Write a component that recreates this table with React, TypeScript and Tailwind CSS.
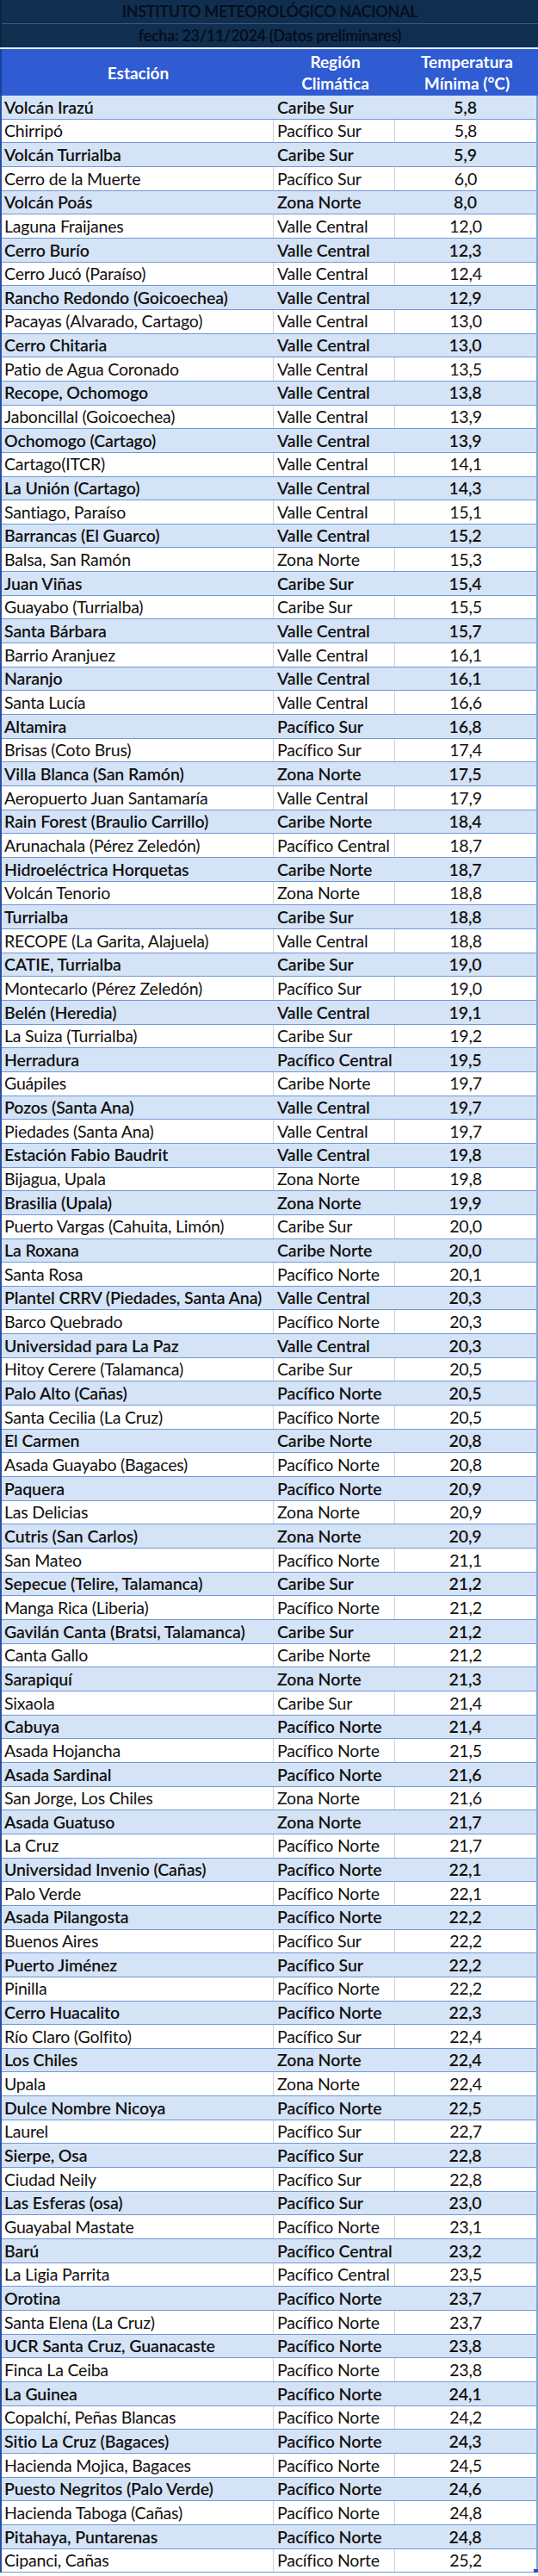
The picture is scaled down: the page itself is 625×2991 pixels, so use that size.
const rows: [string, string, string][] = [
  ["Volcán Irazú", "Caribe Sur", "5,8"],
  ["Chirripó", "Pacífico Sur", "5,8"],
  ["Volcán Turrialba", "Caribe Sur", "5,9"],
  ["Cerro de la Muerte", "Pacífico Sur", "6,0"],
  ["Volcán Poás", "Zona Norte", "8,0"],
  ["Laguna Fraijanes", "Valle Central", "12,0"],
  ["Cerro Burío", "Valle Central", "12,3"],
  ["Cerro Jucó (Paraíso)", "Valle Central", "12,4"],
  ["Rancho Redondo (Goicoechea)", "Valle Central", "12,9"],
  ["Pacayas (Alvarado, Cartago)", "Valle Central", "13,0"],
  ["Cerro Chitaria", "Valle Central", "13,0"],
  ["Patio de Agua Coronado", "Valle Central", "13,5"],
  ["Recope, Ochomogo", "Valle Central", "13,8"],
  ["Jaboncillal (Goicoechea)", "Valle Central", "13,9"],
  ["Ochomogo (Cartago)", "Valle Central", "13,9"],
  ["Cartago(ITCR)", "Valle Central", "14,1"],
  ["La Unión (Cartago)", "Valle Central", "14,3"],
  ["Santiago, Paraíso", "Valle Central", "15,1"],
  ["Barrancas (El Guarco)", "Valle Central", "15,2"],
  ["Balsa, San Ramón", "Zona Norte", "15,3"],
  ["Juan Viñas", "Caribe Sur", "15,4"],
  ["Guayabo (Turrialba)", "Caribe Sur", "15,5"],
  ["Santa Bárbara", "Valle Central", "15,7"],
  ["Barrio Aranjuez", "Valle Central", "16,1"],
  ["Naranjo", "Valle Central", "16,1"],
  ["Santa Lucía", "Valle Central", "16,6"],
  ["Altamira", "Pacífico Sur", "16,8"],
  ["Brisas (Coto Brus)", "Pacífico Sur", "17,4"],
  ["Villa Blanca (San Ramón)", "Zona Norte", "17,5"],
  ["Aeropuerto Juan Santamaría", "Valle Central", "17,9"],
  ["Rain Forest (Braulio Carrillo)", "Caribe Norte", "18,4"],
  ["Arunachala (Pérez Zeledón)", "Pacífico Central", "18,7"],
  ["Hidroeléctrica Horquetas", "Caribe Norte", "18,7"],
  ["Volcán Tenorio", "Zona Norte", "18,8"],
  ["Turrialba", "Caribe Sur", "18,8"],
  ["RECOPE (La Garita, Alajuela)", "Valle Central", "18,8"],
  ["CATIE, Turrialba", "Caribe Sur", "19,0"],
  ["Montecarlo (Pérez Zeledón)", "Pacífico Sur", "19,0"],
  ["Belén (Heredia)", "Valle Central", "19,1"],
  ["La Suiza (Turrialba)", "Caribe Sur", "19,2"],
  ["Herradura", "Pacífico Central", "19,5"],
  ["Guápiles", "Caribe Norte", "19,7"],
  ["Pozos (Santa Ana)", "Valle Central", "19,7"],
  ["Piedades (Santa Ana)", "Valle Central", "19,7"],
  ["Estación Fabio Baudrit", "Valle Central", "19,8"],
  ["Bijagua, Upala", "Zona Norte", "19,8"],
  ["Brasilia (Upala)", "Zona Norte", "19,9"],
  ["Puerto Vargas (Cahuita, Limón)", "Caribe Sur", "20,0"],
  ["La Roxana", "Caribe Norte", "20,0"],
  ["Santa Rosa", "Pacífico Norte", "20,1"],
  ["Plantel CRRV (Piedades, Santa Ana)", "Valle Central", "20,3"],
  ["Barco Quebrado", "Pacífico Norte", "20,3"],
  ["Universidad para La Paz", "Valle Central", "20,3"],
  ["Hitoy Cerere (Talamanca)", "Caribe Sur", "20,5"],
  ["Palo Alto (Cañas)", "Pacífico Norte", "20,5"],
  ["Santa Cecilia (La Cruz)", "Pacífico Norte", "20,5"],
  ["El Carmen", "Caribe Norte", "20,8"],
  ["Asada Guayabo (Bagaces)", "Pacífico Norte", "20,8"],
  ["Paquera", "Pacífico Norte", "20,9"],
  ["Las Delicias", "Zona Norte", "20,9"],
  ["Cutris (San Carlos)", "Zona Norte", "20,9"],
  ["San Mateo", "Pacífico Norte", "21,1"],
  ["Sepecue (Telire, Talamanca)", "Caribe Sur", "21,2"],
  ["Manga Rica (Liberia)", "Pacífico Norte", "21,2"],
  ["Gavilán Canta (Bratsi, Talamanca)", "Caribe Sur", "21,2"],
  ["Canta Gallo", "Caribe Norte", "21,2"],
  ["Sarapiquí", "Zona Norte", "21,3"],
  ["Sixaola", "Caribe Sur", "21,4"],
  ["Cabuya", "Pacífico Norte", "21,4"],
  ["Asada Hojancha", "Pacífico Norte", "21,5"],
  ["Asada Sardinal", "Pacífico Norte", "21,6"],
  ["San Jorge, Los Chiles", "Zona Norte", "21,6"],
  ["Asada Guatuso", "Zona Norte", "21,7"],
  ["La Cruz", "Pacífico Norte", "21,7"],
  ["Universidad Invenio (Cañas)", "Pacífico Norte", "22,1"],
  ["Palo Verde", "Pacífico Norte", "22,1"],
  ["Asada Pilangosta", "Pacífico Norte", "22,2"],
  ["Buenos Aires", "Pacífico Sur", "22,2"],
  ["Puerto Jiménez", "Pacífico Sur", "22,2"],
  ["Pinilla", "Pacífico Norte", "22,2"],
  ["Cerro Huacalito", "Pacífico Norte", "22,3"],
  ["Río Claro (Golfito)", "Pacífico Sur", "22,4"],
  ["Los Chiles", "Zona Norte", "22,4"],
  ["Upala", "Zona Norte", "22,4"],
  ["Dulce Nombre Nicoya", "Pacífico Norte", "22,5"],
  ["Laurel", "Pacífico Sur", "22,7"],
  ["Sierpe, Osa", "Pacífico Sur", "22,8"],
  ["Ciudad Neily", "Pacífico Sur", "22,8"],
  ["Las Esferas (osa)", "Pacífico Sur", "23,0"],
  ["Guayabal Mastate", "Pacífico Norte", "23,1"],
  ["Barú", "Pacífico Central", "23,2"],
  ["La Ligia Parrita", "Pacífico Central", "23,5"],
  ["Orotina", "Pacífico Norte", "23,7"],
  ["Santa Elena (La Cruz)", "Pacífico Norte", "23,7"],
  ["UCR Santa Cruz, Guanacaste", "Pacífico Norte", "23,8"],
  ["Finca La Ceiba", "Pacífico Norte", "23,8"],
  ["La Guinea", "Pacífico Norte", "24,1"],
  ["Copalchí, Peñas Blancas", "Pacífico Norte", "24,2"],
  ["Sitio La Cruz (Bagaces)", "Pacífico Norte", "24,3"],
  ["Hacienda Mojica, Bagaces", "Pacífico Norte", "24,5"],
  ["Puesto Negritos (Palo Verde)", "Pacífico Norte", "24,6"],
  ["Hacienda Taboga (Cañas)", "Pacífico Norte", "24,8"],
  ["Pitahaya, Puntarenas", "Pacífico Norte", "24,8"],
  ["Cipanci, Cañas", "Pacífico Norte", "25,2"],
];

export default function App() {
  return (
    <div className="w-[625px] bg-white font-['Lato',sans-serif] text-[#111]">
      {/* Title */}
      <div className="bg-[#102f50] border-l-2 border-[#0b2440]">
        <div className="h-[28px] flex items-center justify-center border-b border-[#3b5a7d] text-[18px] font-bold tracking-[-0.3px] text-[#050f1e]">
          INSTITUTO METEOROLÓGICO NACIONAL
        </div>
        <div className="h-[27px] flex items-center justify-center text-[18px] font-bold tracking-[-0.3px] text-[#050f1e]">
          fecha: 23/11/2024 (Datos preliminares)
        </div>
      </div>
      <div className="h-[2px] bg-[#e8eef8]" />

      {/* Column header */}
      <div className="grid grid-cols-[317px_141px_1fr] h-[54px] bg-[#2f5bd3] text-white font-bold text-[19px] leading-[25px] border-l-2 border-[#1d3f9c]">
        <div className="flex items-center justify-center">Estación</div>
        <div className="flex flex-col items-center justify-center">
          <span>Región</span>
          <span>Climática</span>
        </div>
        <div className="flex flex-col items-center justify-center">
          <span>Temperatura</span>
          <span>Mínima (°C)</span>
        </div>
      </div>

      {/* Rows */}
      <div className="relative border-l-2 border-r-2 border-l-[#2a4f9c] border-r-[#7fa3dc]">
        {rows.map(([station, region, temp], i) => {
          const blue = i % 2 === 0;
          return (
            <div
              key={i}
              className={
                blue
                  ? "grid grid-cols-[315px_141px_1fr] h-[27.67px] bg-[#d5e3f6] border-b border-[#7199d8] text-[19.5px] font-semibold tracking-[-0.1px] leading-none"
                  : "grid grid-cols-[315px_141px_1fr] h-[27.67px] bg-white border-b border-[#7199d8] text-[19.5px] tracking-[-0.2px] leading-none"
              }
            >
              <div className="flex items-center pl-[3px] whitespace-nowrap overflow-hidden">{station}</div>
              <div
                className={
                  blue
                    ? "flex items-center pl-[5px] whitespace-nowrap"
                    : "flex items-center pl-[4px] whitespace-nowrap border-l border-[#cfd3da]"
                }
              >
                {region}
              </div>
              <div
                className={
                  blue
                    ? "flex items-center justify-center"
                    : "flex items-center justify-center border-l border-[#cfd3da]"
                }
              >
                {temp}
              </div>
            </div>
          );
        })}
        <div className="absolute right-[-2px] bottom-[-1px] w-[5px] h-[5px] bg-[#1f55c4]" />
      </div>
    </div>
  );
}
